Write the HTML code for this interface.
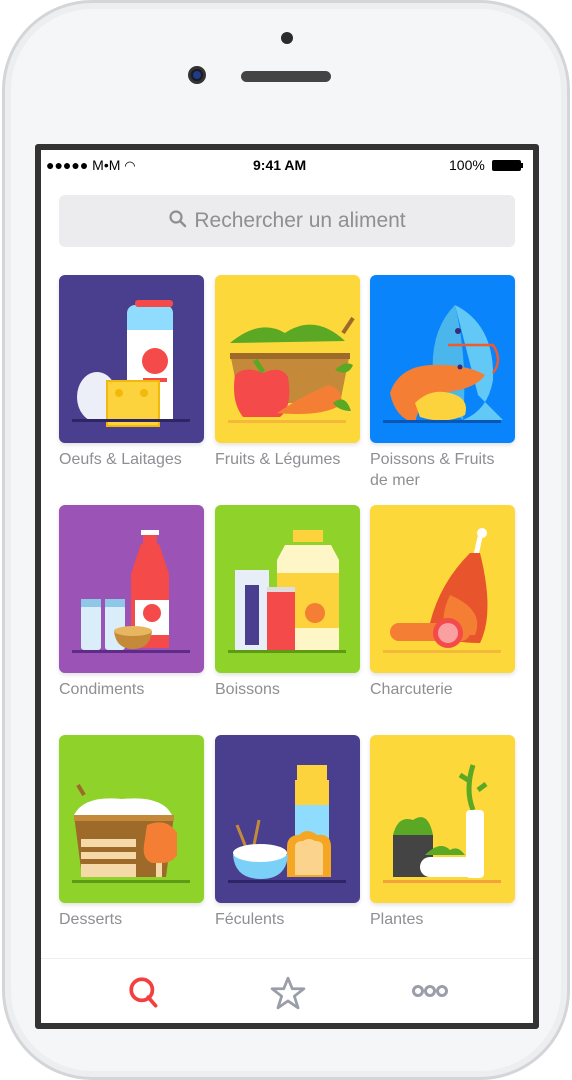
<!DOCTYPE html>
<html><head><meta charset="utf-8"><style>
*{margin:0;padding:0;box-sizing:border-box}
body{width:572px;height:1046px;background:#fff;position:relative;overflow:hidden;font-family:"Liberation Sans",sans-serif}
.phone{position:absolute;left:2px;top:0;width:568px;height:1080px;border-radius:90px;background:#f5f6f8;border:3px solid #d4d5d8;box-shadow:inset 0 0 0 6px #eceef0}
.screen{position:absolute;left:35px;top:144px;width:504px;height:885px;background:#fff;border:6px solid #333;border-radius:3px}
.sb{position:absolute;top:7px;font-size:14px;color:#000}
.search{position:absolute;left:18px;top:45px;width:456px;height:52px;background:#ececee;border-radius:6px;color:#8e8e93;font-size:21px;text-align:center;line-height:52px}
.tile{position:absolute;width:145px;height:168px;border-radius:6px;overflow:hidden;box-shadow:0 2px 4px rgba(0,0,0,.12)}
.lbl{position:absolute;font-size:16px;color:#8e8e93;line-height:21px;width:143px}
.tab{position:absolute;left:0;top:808px;width:492px;height:1px;background:#eee}
</style></head><body>
<div class="phone"></div>
<div style="position:absolute;left:281px;top:32px;width:12px;height:12px;border-radius:50%;background:#2b2b2d"></div>
<div style="position:absolute;left:188px;top:66px;width:18px;height:18px;border-radius:50%;background:#1a1a22;border:3px solid #333"><div style="margin:2px;width:8px;height:8px;border-radius:50%;background:#1e3c8a"></div></div>
<div style="position:absolute;left:241px;top:71px;width:90px;height:11px;border-radius:6px;background:#444"></div>
<div class="screen">
 <div class="sb" style="left:5px">●●●●● M•M <span style="font-size:13px">◠</span></div>
 <div class="sb" style="left:212px;font-weight:bold">9:41 AM</div>
 <div class="sb" style="left:408px">100%</div>
 <div style="position:absolute;left:451px;top:10px;width:29px;height:11px;background:#000;border-radius:2px"></div>
 <div style="position:absolute;left:480px;top:13px;width:2px;height:5px;background:#000"></div>
 <div class="search"><svg width="20" height="20" viewBox="0 0 20 20" style="vertical-align:-2px;margin-right:6px"><circle cx="8" cy="8" r="5.5" fill="none" stroke="#8e8e93" stroke-width="2.2"/><path d="M12 12l5 5" stroke="#8e8e93" stroke-width="2.4" stroke-linecap="round"/></svg>Rechercher un aliment</div>

 <div class="tile" style="left:18px;top:125px;background:#4a3f8f"><svg width="145" height="168">
  <rect x="68" y="30" width="46" height="116" rx="8" fill="#8fdcff"/><rect x="68" y="55" width="46" height="91" fill="#fff"/><rect x="76" y="25" width="38" height="7" rx="3" fill="#f44a4a"/>
  <circle cx="96" cy="86" r="13" fill="#f44a4a"/><rect x="84" y="103" width="24" height="4" fill="#f44a4a"/>
  <ellipse cx="38" cy="122" rx="20" ry="25" fill="#eceff7"/>
  <path d="M48 106h52v45H48z" fill="#fcd33c" stroke="#f0b90b" stroke-width="2"/><circle cx="60" cy="118" r="4" fill="#f0b90b"/><circle cx="85" cy="118" r="4" fill="#f0b90b"/>
  <rect x="13" y="144" width="118" height="3" fill="#2d2566"/></svg></div>
 <div class="lbl" style="left:18px;top:299px">Oeufs &amp; Laitages</div>

 <div class="tile" style="left:174px;top:125px;background:#fdd83a"><svg width="145" height="168">
  <path d="M15 68q30-25 55-10q30-20 60 8z" fill="#5aa823"/><path d="M15 78h120l-10 50H25z" fill="#c48a3a"/><rect x="15" y="78" width="120" height="6" fill="#9d6a2a"/>
  <path d="M128 58l10-15" stroke="#9d6a2a" stroke-width="4"/>
  <path d="M20 100q10-10 28-2q18-8 25 4q5 30-8 40H28q-12-15-8-42z" fill="#f44a4a"/><path d="M40 85l8 12" stroke="#5aa823" stroke-width="5"/>
  <path d="M62 138q30-20 52-28q15 5 12 20q-20 12-64 8z" fill="#f57e35"/>
  <path d="M120 95q10-10 18-5q-5 12-18 5zM118 128q12-10 18 8q-12 0-18-8z" fill="#5aa823"/>
  <rect x="13" y="145" width="118" height="3" fill="#f4b93a"/></svg></div>
 <div class="lbl" style="left:174px;top:299px">Fruits &amp; Légumes</div>

 <div class="tile" style="left:329px;top:125px;background:#0a84fb"><svg width="145" height="168">
  <path d="M85 30q40 20 38 75q-5 30-30 40h40l-25-25" fill="#62c8f5"/><path d="M85 30q-25 25-22 70q10 30 30 45q5-60-8-115z" fill="#4ab6ec"/>
  <circle cx="88" cy="56" r="3" fill="#3b2a7a"/>
  <path d="M78 70h45q10 15 0 28" stroke="#f15a2a" stroke-width="2.5" fill="none"/>
  <path d="M20 118q10-30 50-28q28 0 45 10q-10 15-45 18q-20 5-25 30q-20-5-25-30z" fill="#f57e35"/><circle cx="90" cy="92" r="2.5" fill="#3b2a7a"/>
  <path d="M45 128q15-15 35-10q20 5 15 22q-20 10-45 2z" fill="#fcd33c"/>
  <rect x="13" y="145" width="118" height="3" fill="#0b55b5"/></svg></div>
 <div class="lbl" style="left:329px;top:299px">Poissons &amp; Fruits de mer</div>

 <div class="tile" style="left:18px;top:355px;background:#9b53b5"><svg width="145" height="168">
  <rect x="84" y="25" width="14" height="14" fill="#f44a4a"/><rect x="82" y="25" width="18" height="5" fill="#fff"/>
  <path d="M82 39h18l10 30v74H72V69z" fill="#f44a4a"/><rect x="76" y="95" width="34" height="35" fill="#fff"/><circle cx="93" cy="108" r="9" fill="#f44a4a"/>
  <rect x="22" y="100" width="20" height="45" rx="3" fill="#d9eef8"/><rect x="46" y="100" width="20" height="45" rx="3" fill="#d9eef8"/><rect x="22" y="94" width="20" height="8" fill="#8fc7e8"/><rect x="46" y="94" width="20" height="8" fill="#8fc7e8"/>
  <path d="M55 126h38q-2 18-19 18q-17 0-19-18z" fill="#c48a3a"/><ellipse cx="74" cy="126" rx="19" ry="5" fill="#e8b560"/>
  <rect x="13" y="145" width="118" height="3" fill="#5e2b86"/></svg></div>
 <div class="lbl" style="left:18px;top:529px">Condiments</div>

 <div class="tile" style="left:174px;top:355px;background:#8fd22a"><svg width="145" height="168">
  <rect x="78" y="25" width="30" height="12" fill="#fcd33c"/><path d="M70 40h46l8 15v90H62V55z" fill="#fff6c8"/><rect x="62" y="68" width="62" height="55" fill="#fcd33c"/><circle cx="100" cy="108" r="10" fill="#f57e35"/>
  <rect x="20" y="65" width="34" height="80" fill="#e8eef8"/><rect x="30" y="80" width="14" height="60" fill="#4a3f8f"/>
  <path d="M52 85h28v60H52z" fill="#f44a4a"/><rect x="52" y="82" width="28" height="5" fill="#ddd"/>
  <rect x="13" y="145" width="118" height="3" fill="#5e9a16"/></svg></div>
 <div class="lbl" style="left:174px;top:529px">Boissons</div>

 <div class="tile" style="left:329px;top:355px;background:#fdd83a"><svg width="145" height="168">
  <circle cx="112" cy="28" r="5" fill="#fff"/><path d="M110 32l-4 18" stroke="#fff" stroke-width="5"/>
  <path d="M100 48q-30 30-40 70q5 20 50 20q15-30 0-90z" fill="#e8542c"/><path d="M80 90q-10 20-5 40h30q10-25-25-40z" fill="#f57e35"/>
  <rect x="20" y="118" width="80" height="18" rx="9" fill="#f57e35"/><circle cx="78" cy="128" r="15" fill="#f44a4a"/><circle cx="78" cy="128" r="10" fill="#f9a0a0"/>
  <rect x="13" y="145" width="118" height="3" fill="#f4b93a"/></svg></div>
 <div class="lbl" style="left:329px;top:529px">Charcuterie</div>

 <div class="tile" style="left:18px;top:585px;background:#8fd22a"><svg width="145" height="168">
  <path d="M15 80q10-20 48-16q40-4 50 16z" fill="#fff"/><path d="M15 80h100l-8 62H23z" fill="#9d6a2a"/><rect x="15" y="80" width="100" height="6" fill="#c48a3a"/>
  <path d="M25 60l-6-10" stroke="#9d6a2a" stroke-width="4"/>
  <rect x="22" y="104" width="55" height="38" fill="#f5d9a8"/><rect x="22" y="112" width="55" height="5" fill="#9d6a2a"/><rect x="22" y="124" width="55" height="5" fill="#9d6a2a"/>
  <path d="M88 90q20-8 30 8v22q-5 8-15 8h-10q-10-4-8-18z" fill="#f57e35"/><rect x="97" y="128" width="6" height="14" fill="#f5d9a8"/>
  <rect x="13" y="145" width="118" height="3" fill="#5e9a16"/></svg></div>
 <div class="lbl" style="left:18px;top:759px">Desserts</div>

 <div class="tile" style="left:174px;top:585px;background:#4a3f8f"><svg width="145" height="168">
  <rect x="80" y="45" width="34" height="50" fill="#fcd33c"/><rect x="82" y="30" width="30" height="15" fill="#fcd33c"/><rect x="80" y="70" width="34" height="35" fill="#8fdcff"/>
  <path d="M72 112q0-12 12-12q8-8 18 0q14-2 14 12v30H72z" fill="#f5a623"/><path d="M80 112q0-6 8-6q6-4 12 0q8 0 8 6v28H80z" fill="#fcd38c"/>
  <path d="M22 90l10 25M44 85l-6 30" stroke="#c48a3a" stroke-width="3"/>
  <path d="M18 120h55q-2 24-27 24q-26 0-28-24z" fill="#7ad0f7"/><ellipse cx="45" cy="118" rx="27" ry="9" fill="#fff"/>
  <rect x="13" y="145" width="118" height="3" fill="#2d2566"/></svg></div>
 <div class="lbl" style="left:174px;top:759px">Féculents</div>

 <div class="tile" style="left:329px;top:585px;background:#fdd83a"><svg width="145" height="168">
  <path d="M103 30q-8 25 0 45M98 45l-8-5M108 55l8-6" stroke="#5aa823" stroke-width="5" fill="none"/>
  <rect x="96" y="75" width="18" height="68" rx="4" fill="#fff"/>
  <rect x="23" y="100" width="40" height="42" fill="#444"/><path d="M23 100q5-20 20-15q15-10 20 15z" fill="#5aa823"/>
  <rect x="50" y="122" width="56" height="20" rx="10" fill="#fff"/><path d="M55 120q15-15 25-5q8-5 15 5z" fill="#5aa823"/>
  <rect x="13" y="145" width="118" height="3" fill="#f4a23a"/></svg></div>
 <div class="lbl" style="left:329px;top:759px">Plantes</div>

 <div class="tab"></div>
 <svg style="position:absolute;left:87px;top:825px" width="34" height="36" viewBox="0 0 32 34"><circle cx="13" cy="14" r="10" fill="none" stroke="#f43f3f" stroke-width="3.5"/><path d="M19 21l7 8" stroke="#f43f3f" stroke-width="3.5" stroke-linecap="round"/></svg>
 <svg style="position:absolute;left:229px;top:825px" width="36" height="36" viewBox="0 0 34 34"><path d="M17 3l4 10h11l-9 7 3.5 11L17 24.5 7.5 31 11 20 2 13h11z" fill="none" stroke="#9a9ea8" stroke-width="2.6" stroke-linejoin="round"/></svg>
 <svg style="position:absolute;left:370px;top:834px" width="40" height="14"><g fill="none" stroke="#9a9ea8" stroke-width="3"><circle cx="7" cy="7" r="4.5"/><circle cx="19" cy="7" r="4.5"/><circle cx="31" cy="7" r="4.5"/></g></svg>
</div>
</body></html>
